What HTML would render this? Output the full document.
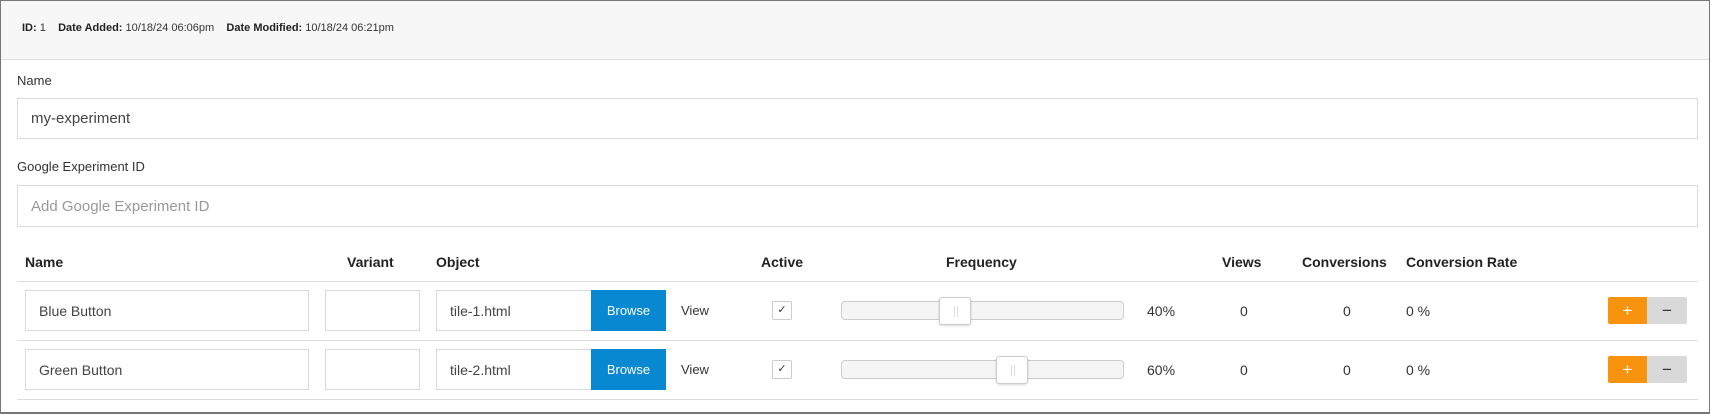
<!DOCTYPE html>
<html><head><meta charset="utf-8"><style>
*{box-sizing:border-box;margin:0;padding:0}
body{width:1712px;height:414px;background:#fff;font-family:"Liberation Sans",sans-serif;color:#333;position:relative;overflow:hidden}
.frame{position:absolute;left:0;top:0;width:1710px;height:414px;border:1px solid #777;border-bottom-width:2px}
.hdr{position:absolute;left:1px;top:1px;width:1708px;height:59px;background:#f7f7f7;border-bottom:1px solid #ddd;font-size:11px;line-height:12px;padding:21px 0 0 21px;color:#333}
.hdr b{color:#222}
.a{position:absolute}
.lbl{font-size:13px;color:#333}
.inp{position:absolute;border:1px solid #d9d9d9;background:#fff;font-size:14px;color:#444;padding-left:13px;display:flex;align-items:center}
.th{position:absolute;top:254px;font-size:14px;font-weight:bold;color:#222}
.line{position:absolute;left:17px;width:1681px;height:1px;background:#ddd}
.br{position:absolute;background:#0788d0;color:#fff;font-size:13px;display:flex;align-items:center;justify-content:center}
.t{position:absolute;font-size:14px;color:#333}
.cb{position:absolute;width:20px;height:19px;border:1px solid #ccc;border-radius:2px;font-size:11px;text-align:center;line-height:17px;color:#333}
.tr{position:absolute;left:841px;width:283px;height:19px;background:#f5f5f5;border:1px solid #ccc;border-radius:4px}
.thumb{position:absolute;width:32px;height:28px;background:#fff;border:1px solid #ccc;border-radius:3px;box-shadow:0 1px 2px rgba(0,0,0,.15)}
.thumb:after{content:"";position:absolute;left:14px;top:8px;width:2px;height:11px;border-left:1px solid #ddd;border-right:1px solid #ddd}
.plus{position:absolute;left:1608px;width:39px;height:27px;background:#f7930e;color:#fff;font-size:17px;display:flex;align-items:center;justify-content:center;border-radius:2px 0 0 2px}
.minus{position:absolute;left:1647px;width:40px;height:27px;background:#d9d9d9;color:#333;font-size:17px;display:flex;align-items:center;justify-content:center;border-radius:0 2px 2px 0}
</style></head><body>
<div class="frame"></div>
<div class="hdr"><b>ID:</b> 1 &nbsp;&nbsp; <b>Date Added:</b> 10/18/24 06:06pm &nbsp;&nbsp; <b>Date Modified:</b> 10/18/24 06:21pm</div>
<div class="a lbl" style="left:17px;top:73px">Name</div>
<div class="inp" style="left:17px;top:98px;width:1681px;height:41px;font-size:15px">my-experiment</div>
<div class="a lbl" style="left:17px;top:159px">Google Experiment ID</div>
<div class="inp" style="left:17px;top:185px;width:1681px;height:42px;font-size:15px;color:#999">Add Google Experiment ID</div>

<div class="th" style="left:25px">Name</div>
<div class="th" style="left:347px">Variant</div>
<div class="th" style="left:436px">Object</div>
<div class="th" style="left:761px">Active</div>
<div class="th" style="left:946px">Frequency</div>
<div class="th" style="left:1222px">Views</div>
<div class="th" style="left:1302px">Conversions</div>
<div class="th" style="left:1406px">Conversion Rate</div>
<div class="line" style="top:281px"></div>
<div class="line" style="top:340px"></div>
<div class="line" style="top:399px"></div>

<div class="inp" style="left:25px;top:290px;width:284px;height:41px">Blue Button</div>
<div class="inp" style="left:325px;top:290px;width:95px;height:41px"></div>
<div class="inp" style="left:436px;top:290px;width:156px;height:41px">tile-1.html</div>
<div class="br" style="left:591px;top:290px;width:75px;height:41px">Browse</div>
<div class="t" style="left:681px;top:303px;font-size:13px">View</div>
<div class="cb" style="left:772px;top:301px">✓</div>
<div class="tr" style="top:301px"></div>
<div class="thumb" style="left:939px;top:297px"></div>
<div class="t" style="left:1147px;top:303px">40%</div>
<div class="t" style="left:1240px;top:303px">0</div>
<div class="t" style="left:1343px;top:303px">0</div>
<div class="t" style="left:1406px;top:303px">0 %</div>
<div class="plus" style="top:297px">+</div><div class="minus" style="top:297px">−</div>

<div class="inp" style="left:25px;top:349px;width:284px;height:41px">Green Button</div>
<div class="inp" style="left:325px;top:349px;width:95px;height:41px"></div>
<div class="inp" style="left:436px;top:349px;width:156px;height:41px">tile-2.html</div>
<div class="br" style="left:591px;top:349px;width:75px;height:41px">Browse</div>
<div class="t" style="left:681px;top:362px;font-size:13px">View</div>
<div class="cb" style="left:772px;top:360px">✓</div>
<div class="tr" style="top:360px"></div>
<div class="thumb" style="left:996px;top:356px"></div>
<div class="t" style="left:1147px;top:362px">60%</div>
<div class="t" style="left:1240px;top:362px">0</div>
<div class="t" style="left:1343px;top:362px">0</div>
<div class="t" style="left:1406px;top:362px">0 %</div>
<div class="plus" style="top:356px">+</div><div class="minus" style="top:356px">−</div>
</body></html>
